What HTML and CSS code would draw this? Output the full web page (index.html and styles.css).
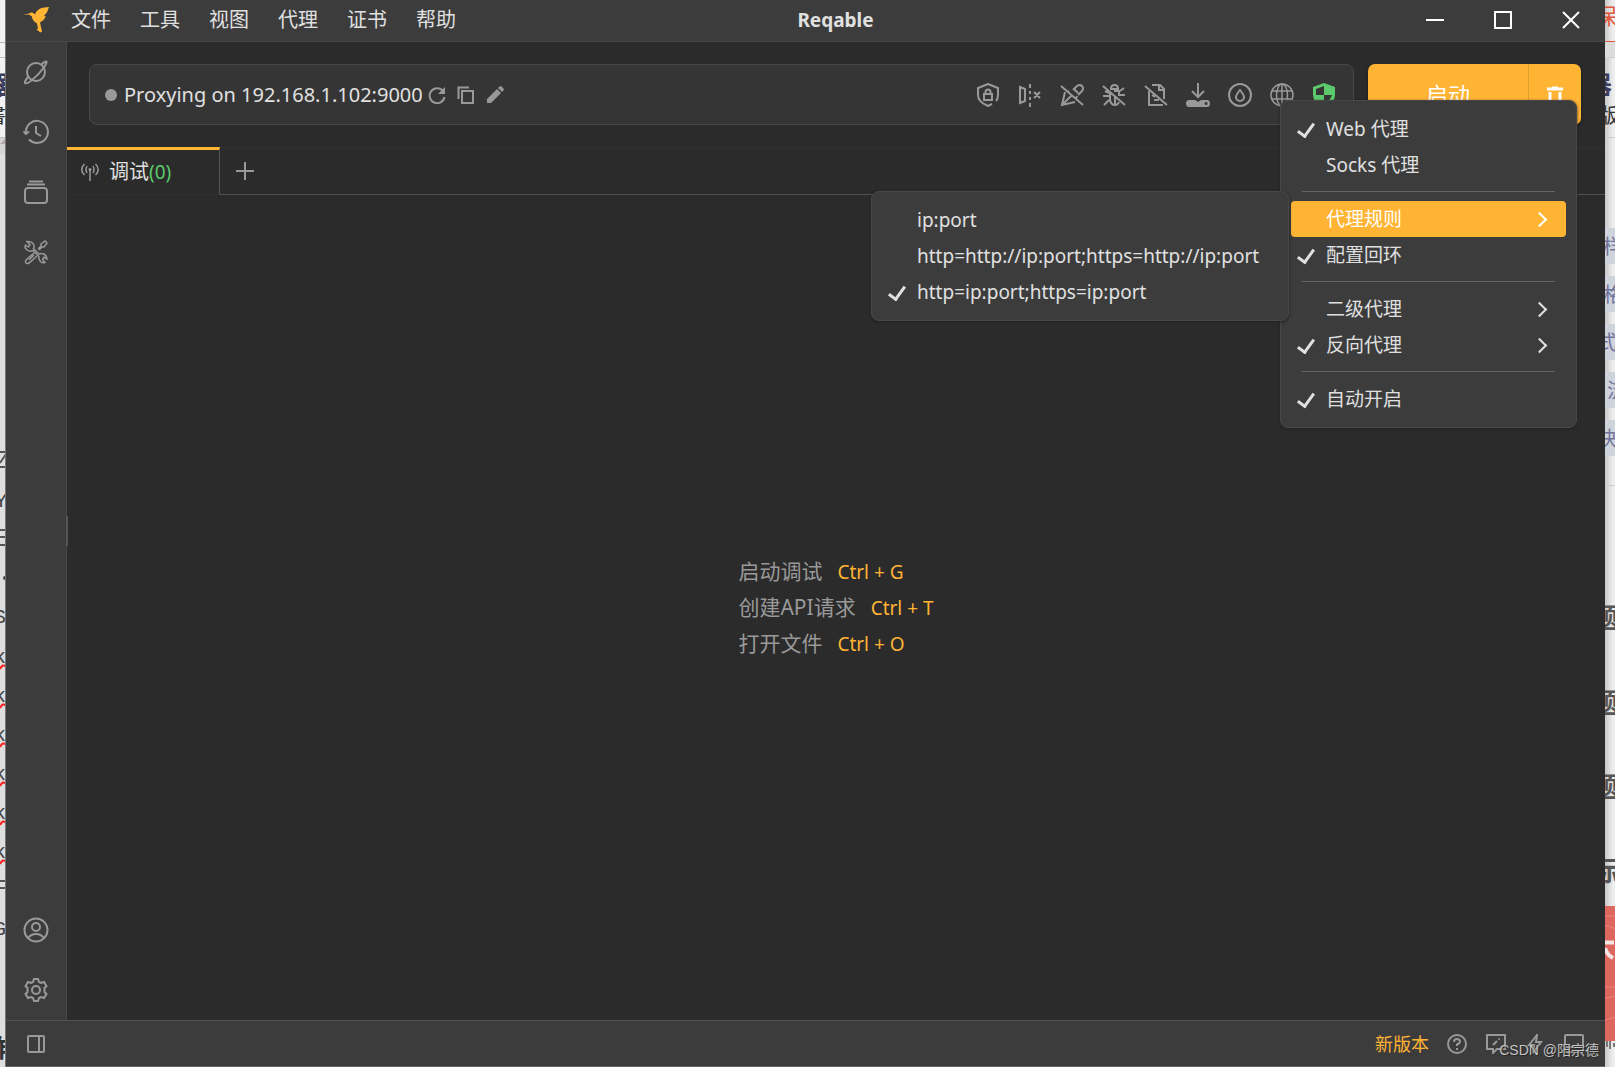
FILE: index.html
```html
<!DOCTYPE html>
<html lang="zh-CN">
<head>
<meta charset="utf-8">
<meta name="viewport" content="width=device-width, initial-scale=1">
<title>Reqable</title>
<link rel="stylesheet" href="styles.css">
</head>
<body>
<div class="desktop">
  <svg class="backdrop backdrop-left" aria-hidden="true">
    <rect width="6" height="155" fill="#f2f2f2"/>
    <path d="M0 42.500h6M0 57.500h6M0 137.500h6" stroke="#bbb"/>
    <rect y="138" width="6" height="17" fill="#d5d5d5"/>
    <text x="-15" y="94" class="doc-navy">器</text>
    <text x="-14" y="123" class="doc-dark">書</text>
    <path d="M0 144l6-6v6z" fill="#b5a9a9"/>
    <path d="M0 452h6M0 467h6M0 463l6-9M0 530h6M0 537h6M0 545h6M0 881h6M0 888h6" stroke="#555" stroke-width="2" fill="none"/>
    <text x="-5" y="507" class="doc-mono">Y</text>
    <circle cx="5" cy="578" r="2" fill="#444"/>
    <text x="-6" y="623" class="doc-mono">S</text>
    <g class="doc-mono">
      <text x="-6" y="663">k</text><text x="-6" y="702">k</text><text x="-6" y="741">k</text>
      <text x="-6" y="780">k</text><text x="-6" y="819">k</text><text x="-6" y="858">k</text>
    </g>
    <path d="M0 669q3-6 6-2M0 708q3-6 6-2M0 747q3-6 6-2M0 786q3-6 6-2M0 825q3-6 6-2M0 864q3-6 6-2" stroke="#f22" stroke-width="2" fill="none"/>
    <text x="-6" y="935" class="doc-mono">G</text>
    <text x="-14" y="1057" class="doc-dark doc-large">作</text>
  </svg>

  <div class="app">
    <header class="titlebar">
      <svg class="logo" viewBox="0 0 26 26" aria-hidden="true"><path d="M0 8l6-1.500q2-2 5 0l1 1q2-6 9-7l5-.5q-1 5-5 9 1 0 2 .5-2 4-6 6l2 9-1.500 1-4-3 1.500-1-1-5q-5-3-5-7l-3-2z" fill="#ffb433"/></svg>
      <div class="titlebar-main">
        <nav class="menubar">
          <button>文件</button><button>工具</button><button>视图</button><button>代理</button><button>证书</button><button>帮助</button>
        </nav>
        <h1>Reqable</h1>
        <div class="window-controls">
          <button aria-label="最小化"><svg viewBox="0 0 18 18"><path d="M0 9h18"/></svg></button>
          <button aria-label="最大化"><svg viewBox="0 0 18 18"><path d="M1 1h16v16H1z"/></svg></button>
          <button aria-label="关闭"><svg viewBox="0 0 18 18"><path d="M1 1l16 16M17 1L1 17"/></svg></button>
        </div>
      </div>
    </header>

    <div class="body">
      <aside class="sidebar">
        <button aria-label="调试"><svg viewBox="0 0 24 24"><circle cx="12" cy="12" r="9"/><path d="M17 5c3-3 5-4 5.500-3.500s-.5 3-3 6.500S13 16 8 20s-6.500 3.500-7 3 .5-3 3-6"/></svg></button>
        <button aria-label="历史"><svg viewBox="0 0 24 24"><path d="M2 13a11 11 0 1 1 3 6.500M-.5 11.500L2 14l3-2.500M12 6v7l5 3"/></svg></button>
        <button aria-label="集合"><svg viewBox="0 0 24 24"><rect x="1" y="8" width="22" height="15" rx="3"/><path d="M3 4.500h18M5 1.500h14"/></svg></button>
        <button aria-label="工具箱"><svg viewBox="0 0 24 24" class="fine"><path d="M10 8q.5-3-1.500-5T3 1.500L6 4.500 4.500 7 1.500 5Q0 8 3 10t6 .5l6 6q-.5 3 1.500 5T21 22.500l-2.500-3L20 17l3 2q0-3-2.500-4.500T15 14L9 8M15 10l3-3h2l3-4-2-2-4 3v2l-3 3M10 13l-8 7q-1 2 0 3t3 0l8-7M5 20l5-5"/></svg></button>
        <span class="spacer"></span>
        <button aria-label="账户"><svg viewBox="0 0 24 24"><circle cx="12" cy="12" r="11.500"/><circle cx="12" cy="9" r="4"/><path d="M4 20q3-4 8-4t8 4"/></svg></button>
        <button aria-label="设置"><svg viewBox="0 0 24 24"><path d="M9 4l1-3h4l1 3 2 1 3-1 2.500 4-2 2v4l2 2-2.500 4-3-1-2 1-1 3h-4l-1-3-2-1-3 1L1.500 16l2-2v-4l-2-2L4 4l3 1z"/><circle cx="12" cy="12" r="4"/></svg></button>
        <span class="resize-handle"></span>
      </aside>

      <main class="main">
        <section class="toolbar">
          <div class="address">
            <span class="status-dot"></span>
            <span class="address-text">Proxying on 192.168.1.102:9000</span>
            <div class="address-actions">
              <button aria-label="刷新"><svg viewBox="0 0 18 18"><path d="M15 5A7.500 7.500 0 1 0 16.500 11"/><path d="M17 1v7h-7z" class="solid"/></svg></button>
              <button aria-label="复制"><svg viewBox="0 0 18 18"><path d="M5 5h11v12H5zM1.500 13V1.500H12"/></svg></button>
              <button aria-label="编辑"><svg viewBox="0 0 18 18"><path d="M1 17v-4L11 3l4 4L5 17zM12 2l1.500-1.500q1-.5 2 0L17.500 2.500q.5 1 0 2L16 6z" class="solid"/></svg></button>
            </div>
            <div class="tools">
              <button aria-label="证书"><svg viewBox="0 0 24 24"><path d="M16 21l-4 2C5 20 2 17 2 12V5l10-4 10 4v7q0 4-2 6M8 11h8v6H8zM9.500 11V9q0-2.500 2.500-2.500T14.500 9v2"/></svg></button>
              <button aria-label="镜像"><svg viewBox="0 0 24 24"><path d="M2 4l5 2v12l-5 2zM12 1v4M12 8v3M12 14v3M12 20v4M16 9l6 6M22 9l-6 6"/></svg></button>
              <button aria-label="重写"><svg viewBox="0 0 24 24"><path d="M1 3l22 19M5 9l-3 13 13-3M3 21l9-9M7 9l2-1M16 16l1-3M14 6l4 4M13 7l4-4q3-2 5 0t0 5l-4 4"/></svg></button>
              <button aria-label="断点"><svg viewBox="0 0 24 24"><path d="M1 3l22 19M9 6q0-4 3.500-4T16 6zM8 9v8q1 5 5 5 3 0 4-3M13 13v8M12 8h5v5M1 13h6M18 12h5M7 17l-5 5M18 8l4-3M7 10L3 8"/></svg></button>
              <button aria-label="脚本"><svg viewBox="0 0 24 24"><path d="M1 3l22 19M5 8v14h14M8 2h8l4 4v10M15 2v5h5M8 12l3 2M10 17h5"/></svg></button>
              <button aria-label="下载"><svg viewBox="0 0 24 24"><path d="M12 0v13M6 8l6 6 6-6"/><path fill-rule="evenodd" d="M3 17h6l3 2 3-2h6q3 0 3 3.500T21 24H3q-3 0-3-3.500T3 17zm17 2a1.500 1.500 0 1 0 .1 3 1.500 1.500 0 0 0-.1-3z" class="solid"/></svg></button>
              <button aria-label="弱网"><svg viewBox="0 0 24 24"><circle cx="12" cy="12" r="11"/><path d="M12 7q-4 5-4 7a4 4 0 0 0 8 0q0-2-4-7z"/></svg></button>
              <button aria-label="网络"><svg viewBox="0 0 24 24" class="fine"><circle cx="12" cy="12" r="11"/><ellipse cx="12" cy="12" rx="5.500" ry="11"/><path d="M2 8h20M2 16h20M12 1v22M17 15l6 6"/></svg></button>
              <button aria-label="系统代理" class="active"><svg viewBox="0 0 24 24"><path fill-rule="evenodd" d="M12 0l11 4v8q0 8-11 12Q1 20 1 12V4zM4 6v6h8v8q7-3 8-8h-8V3z" class="solid"/></svg></button>
            </div>
          </div>
          <div class="run-group">
            <button class="run">启动</button>
            <button class="clear" aria-label="清空"><svg viewBox="0 0 18 18"><path d="M1 3h16M6 2h6M4 6v11h10V6"/></svg></button>
          </div>

          <ul class="menu" role="menu">
            <li><button class="checked">Web 代理</button></li>
            <li><button>Socks 代理</button></li>
            <li class="divider"></li>
            <li class="has-submenu">
              <button class="highlight more">代理规则</button>
              <ul class="menu submenu" role="menu">
                <li><button>ip:port</button></li>
                <li><button>http=http://ip:port;https=http://ip:port</button></li>
                <li><button class="checked">http=ip:port;https=ip:port</button></li>
              </ul>
            </li>
            <li><button class="checked">配置回环</button></li>
            <li class="divider"></li>
            <li><button class="more">二级代理</button></li>
            <li><button class="checked more">反向代理</button></li>
            <li class="divider"></li>
            <li><button class="checked">自动开启</button></li>
          </ul>
        </section>

        <div class="tabs">
          <button class="tab">
            <svg viewBox="0 0 20 20"><path d="M10 8v11M7 4q-2 3.500 0 7M13 4q2 3.500 0 7M4.500 2Q-1 7.500 4.500 13M15.500 2Q21 7.500 15.500 13"/><circle cx="10" cy="7.500" r="1.500" class="solid"/></svg>
            <span>调试<span class="count">(0)</span></span>
          </button>
          <div class="tab-rest"><button aria-label="新建标签"><svg viewBox="0 0 18 18"><path d="M9 0v18M0 9h18"/></svg></button></div>
        </div>

        <section class="empty">
          <dl>
            <div><dt>启动调试</dt><dd>Ctrl + G</dd></div>
            <div><dt>创建API请求</dt><dd>Ctrl + T</dd></div>
            <div><dt>打开文件</dt><dd>Ctrl + O</dd></div>
          </dl>
        </section>
      </main>
    </div>

    <footer class="statusbar">
      <button class="panel-toggle" aria-label="侧栏"><svg viewBox="0 0 20 20"><rect x="2" y="2" width="16" height="16" rx="1"/><path d="M13 2v16"/></svg></button>
      <a class="update" href="#">新版本</a>
      <button aria-label="帮助"><svg viewBox="0 0 20 20"><circle cx="10" cy="10" r="9"/><path d="M7 8q0-3 3-3t3 2.500q0 1.500-3 3V12M10 14v2"/></svg></button>
      <button aria-label="反馈"><svg viewBox="0 0 20 20"><path d="M1 1h18v14h-8l-4 4v-4H1zM7 11l4-4M12.500 5.500l1-1"/></svg></button>
      <button aria-label="快捷"><svg viewBox="0 0 20 20"><path d="M12 1l-8 10h5l-1 8 8-11h-5z"/></svg></button>
      <button aria-label="布局"><svg viewBox="0 0 20 20"><rect x="1" y="1" width="18" height="17" rx="1"/><path d="M1 13h18"/></svg></button>
    </footer>
  </div>

  <svg class="backdrop backdrop-right" aria-hidden="true">
    <rect y="42" width="11" height="15" fill="#dcdcdc"/>
    <text x="-10" y="24" class="doc-red">保</text>
    <path d="M0 41.500h11" stroke="#e2563a"/>
    <path d="M0 57.500h11M0 137.500h11M0 485.500h11" stroke="#ccc"/>
    <text x="-18" y="94" class="doc-navy">器</text>
    <text x="-6" y="123" class="doc-dark">版</text>
    <g fill="#cfd3dc"><rect y="228" width="11" height="36"/><rect y="276" width="11" height="36"/><rect y="324" width="11" height="36"/><rect y="372" width="11" height="36"/><rect y="420" width="11" height="36"/></g>
    <g class="doc-blue"><text x="-2" y="254">样</text><text x="-2" y="302">格</text><text x="-8" y="350">式</text><text x="2" y="398">流</text><text x="-8" y="446">块</text></g>
    <g class="doc-head"><text x="-14" y="628">题</text><text x="-14" y="713">题</text><text x="-14" y="797">题</text><text x="-14" y="881">标</text></g>
    <rect y="906" width="11" height="135" fill="#de685f"/>
    <path d="M0 916h11M0 925l11 4M0 987h11M0 998l11-2M0 1020l11-3" stroke="#e88880" fill="none"/>
    <path d="M0 942.500h9M0 948q2 7 8 10" stroke="#f3e6e5" stroke-width="4" fill="none"/>
    <path d="M2 1041v6M5 1041v8M9 1043v4" stroke="#777" stroke-width="2"/>
  </svg>
  <span class="watermark">CSDN @阳宗德</span>
</div>
</body>
</html>
```
FILE: styles.css
```css
:root {
  --chrome: #3c3c3c;
  --canvas: #2b2b2b;
  --line: #484848;
  --accent: #ffb433;
  --green: #5cca6c;
  --icon: #999;
  --text: #e0e0e0;
}

* { box-sizing: border-box; }

body {
  margin: 0;
  font-family: "Noto Sans", "Noto Sans CJK SC", sans-serif;
  font-size: 20px;
  line-height: 28px;
  color: var(--text);
}

button {
  display: flex;
  align-items: center;
  justify-content: center;
  padding: 0;
  border: 0;
  background: none;
  color: inherit;
  font: inherit;
  white-space: nowrap;
}

ul, dl, dd, h1 { margin: 0; padding: 0; }
ul { list-style: none; }

svg { display: block; flex: none; fill: none; stroke: currentColor; }
svg .solid { fill: currentColor; stroke: none; }

.desktop { position: relative; display: flex; height: 100vh; overflow: hidden; background: #eee; }

.backdrop { height: 100%; stroke: none; overflow: hidden; }
.backdrop-left { width: 6px; background: #dedede; border-right: 1px solid #777; }
.backdrop-right { width: 10px; background: linear-gradient(90deg, #c8c8c8, #eee 80%); }
.doc-navy { font-size: 25px; font-weight: 700; fill: #3d3d5c; }
.doc-dark { font-size: 20px; fill: #333; }
.doc-large { font-size: 25px; font-weight: 700; }
.doc-mono { font-family: "Liberation Mono", monospace; font-size: 20px; fill: #444; }
.doc-red { font-size: 22px; fill: #e2563a; }
.doc-blue { font-size: 20px; fill: #70749a; }
.doc-head { font-size: 27px; font-weight: 700; fill: #555; }

.app { flex: 1; min-width: 0; display: flex; flex-direction: column; background: var(--canvas); border-bottom: 1px solid #666; }

.titlebar { display: flex; align-items: center; height: 42px; padding-bottom: 2px; background: var(--chrome); border-bottom: 1px solid var(--line); }
.logo { width: 26px; height: 26px; margin: 0 17px; stroke: none; }
.titlebar-main { flex: 1; display: grid; grid-template-columns: 1fr auto 1fr; align-items: center; }
.titlebar h1 { font-size: 19px; line-height: 28px; font-weight: 700; }
.menubar { display: flex; gap: 29px; padding-left: 5px; }
.window-controls { display: flex; justify-content: flex-end; color: #fff; }
.window-controls button { width: 68px; height: 40px; }
.window-controls svg { width: 18px; height: 18px; stroke-width: 2; }

.body { flex: 1; min-height: 0; display: flex; }

.sidebar { position: relative; display: flex; flex-direction: column; width: 61px; background: var(--chrome); border-right: 1px solid var(--line); color: var(--icon); }
.sidebar button { height: 60px; }
.sidebar svg { width: 24px; height: 24px; stroke-width: 2; overflow: visible; }
.spacer { flex: 1; }
.resize-handle { position: absolute; right: -2px; top: 474px; width: 2px; height: 30px; background: #555; }

.main { flex: 1; min-width: 0; display: flex; flex-direction: column; }

.toolbar { position: relative; display: flex; gap: 14px; padding: 22px 24px 22px 22px; }
.address { flex: 1; display: flex; align-items: center; height: 61px; padding: 0 8px 0 15px; background: #353535; border: 1px solid var(--line); border-radius: 8px; }
.status-dot { width: 12px; height: 12px; margin-right: 7px; border-radius: 50%; background: var(--icon); }
.address-actions, .tools { display: flex; color: var(--icon); }
.address-actions button { width: 29px; height: 30px; }
.address-actions svg { width: 18px; height: 18px; stroke-width: 2; }
.tools { margin-left: auto; }
.tools button { width: 42px; height: 42px; }
.tools svg { width: 24px; height: 24px; stroke-width: 2; }
.sidebar .fine, .tools .fine { stroke-width: 1.500; }
.tools .active { color: var(--green); }

.run-group { display: flex; width: 213px; height: 61px; background: var(--accent); border-radius: 7px; color: #fff; box-shadow: 0 2px 3px #1b1b1b; }
.run { flex: 1; font-size: 22px; padding-bottom: 2px; }
.clear { width: 53px; border-left: 1px solid #dda030; }
.clear svg { width: 18px; height: 18px; stroke-width: 3; }

.menu { position: absolute; z-index: 2; top: 58px; right: 28px; width: 297px; padding: 10px; background: var(--chrome); border: 1px solid var(--line); border-radius: 8px; box-shadow: 0 1px 3px #222; }
.menu button { position: relative; justify-content: flex-start; width: 100%; height: 36px; padding-left: 35px; border-radius: 4px; font-size: 19px; }
.menu .divider { height: 18px; padding: 8px 11px; }
.menu .divider::before { content: ""; display: block; height: 1px; background: #666; }
.menu .highlight { background: var(--accent); color: #fff; }
.menu .checked::before { content: ""; position: absolute; left: 10px; top: 9px; width: 7px; height: 14px; border: solid; border-width: 0 3px 3px 0; transform: rotate(36deg); }
.menu .more::after { content: ""; position: absolute; right: 21px; top: 13px; width: 9px; height: 9px; border: solid; border-width: 2px 2px 0 0; transform: rotate(45deg); }
.has-submenu { position: relative; }
.submenu { top: -10px; right: 277px; width: 418px; }

.tabs { display: flex; height: 48px; }
.tab { width: 153px; gap: 9px; justify-content: flex-start; padding-left: 13px; border-top: 3px solid var(--accent); border-right: 1px solid #555; border-bottom: 1px solid #303030; }
.tab svg { width: 20px; height: 20px; color: var(--icon); stroke-width: 1.500; }
.count { font-size: 19px; color: var(--green); }
.tab-rest { flex: 1; display: flex; align-items: center; padding-left: 16px; border-top: 1px solid #303030; border-bottom: 1px solid #505050; color: var(--icon); }
.tab-rest svg { width: 18px; height: 18px; stroke-width: 2; }

.empty { flex: 1; display: flex; align-items: center; justify-content: center; }
.empty dl > div { display: flex; gap: 15px; line-height: 35px; }
.empty dt { font-size: 21px; color: var(--icon); }
.empty dd { padding-top: 1px; font-size: 19px; color: var(--accent); }

.statusbar { display: flex; align-items: center; height: 46px; padding: 0 12px 0 15px; background: var(--chrome); border-top: 1px solid #505050; color: var(--icon); }
.statusbar button { width: 39px; height: 40px; }
.statusbar .panel-toggle { width: 30px; margin-right: auto; }
.statusbar svg { width: 20px; height: 20px; stroke-width: 2; }
.update { margin-right: 8px; font-size: 18px; color: var(--accent); text-decoration: none; }

.watermark { position: absolute; right: 16px; bottom: 7px; font: 14px/20px "Liberation Sans", "Noto Sans CJK SC", sans-serif; color: #c4c4c4; text-shadow: 1px 1px 1px #222; }
```
